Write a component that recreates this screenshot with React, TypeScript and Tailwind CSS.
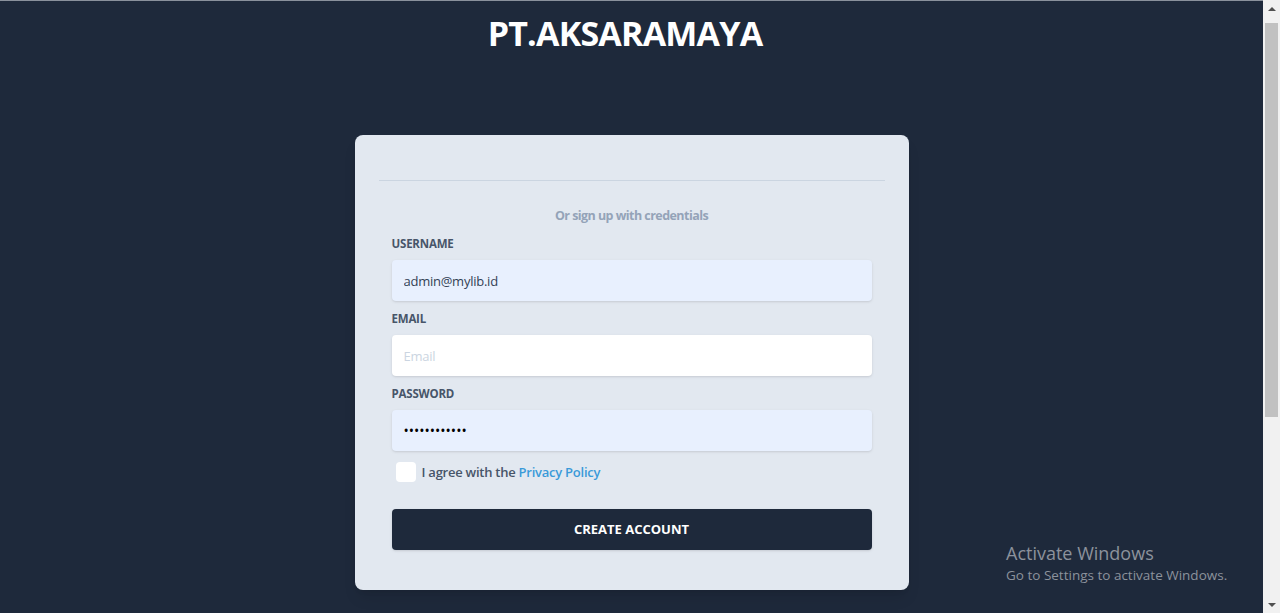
const fieldLabel =
  "mb-2 block text-[11.5px] font-bold uppercase leading-4 tracking-[-0.2px] text-[#475569]";
const fieldInput =
  "block h-[41px] w-full rounded border-0 px-3 text-[13px] tracking-[-0.25px] text-[#334155] shadow outline-none";

function Field({
  label,
  children,
}: {
  label: string;
  children: React.ReactNode;
}) {
  return (
    <div className="mb-[10px]">
      <label className={fieldLabel}>{label}</label>
      {children}
    </div>
  );
}

function Scrollbar() {
  return (
    <div className="flex w-[17px] shrink-0 flex-col bg-[#f1f1f1]">
      <div className="flex h-[17px] items-center justify-center">
        <div className="h-0 w-0 border-x-[4px] border-b-[4px] border-x-transparent border-b-[#505050]" />
      </div>
      <div className="flex-1 px-[2px] pt-[6px]">
        <div className="h-[394px] w-full bg-[#c1c1c1]" />
      </div>
      <div className="flex h-[17px] items-center justify-center">
        <div className="h-0 w-0 border-x-[4px] border-t-[4px] border-x-transparent border-t-[#505050]" />
      </div>
    </div>
  );
}

export default function App() {
  return (
    <div className="flex h-[613px] w-full overflow-hidden bg-[#1e293b] font-['Open_Sans','Noto_Sans',sans-serif]">
      <main className="relative flex-1 border-t border-[#8a919c]">
        <h1 className="mt-[14px] pr-[13px] text-center text-[34px] font-bold leading-9 tracking-[-0.8px] text-white">
          PT.AKSARAMAYA
        </h1>

        <div className="mx-auto mt-[84px] w-[554px] rounded-lg bg-[#e2e8f0] shadow-lg">
          <div className="px-6 pt-[45px]">
            <hr className="border-0 border-b border-[#cbd5e1]" />
          </div>

          <form className="px-[37px] pt-[25px] pb-[40px]">
            <div className="mb-[10px] text-center text-[12.5px] font-bold leading-5 tracking-[-0.55px] text-[#94a3b8]">
              Or sign up with credentials
            </div>

            <Field label="Username">
              <input
                type="text"
                readOnly
                value="admin@mylib.id"
                className={`${fieldInput} bg-[#e8f0fe]`}
              />
            </Field>

            <Field label="Email">
              <input
                type="email"
                placeholder="Email"
                className={`${fieldInput} bg-white placeholder:text-[#cbd5e1]`}
              />
            </Field>

            <Field label="Password">
              <input
                type="password"
                readOnly
                value="adminpass123"
                className="block h-[41px] w-full rounded border-0 bg-[#e8f0fe] px-3 text-sm text-black shadow outline-none"
              />
            </Field>

            <label className="mt-[11px] flex items-center">
              <span className="ml-1 h-5 w-5 rounded bg-white" />
              <span className="ml-[6px] text-[13px] font-semibold leading-5 tracking-[-0.25px] text-[#475569]">
                I agree with the{" "}
                <a href="#" className="text-[#3a9ad9]">
                  Privacy Policy
                </a>
              </span>
            </label>

            <button
              type="button"
              className="mt-[27px] h-[41px] w-full rounded bg-[#1e293b] text-[13px] font-bold uppercase text-white shadow"
            >
              Create Account
            </button>
          </form>
        </div>

        <div className="absolute left-[1006px] top-[540px] text-[#8c929c]">
          <div className="text-[18px] leading-6">Activate Windows</div>
          <div className="text-[13.5px] leading-5">Go to Settings to activate Windows.</div>
        </div>
      </main>
      <Scrollbar />
    </div>
  );
}
